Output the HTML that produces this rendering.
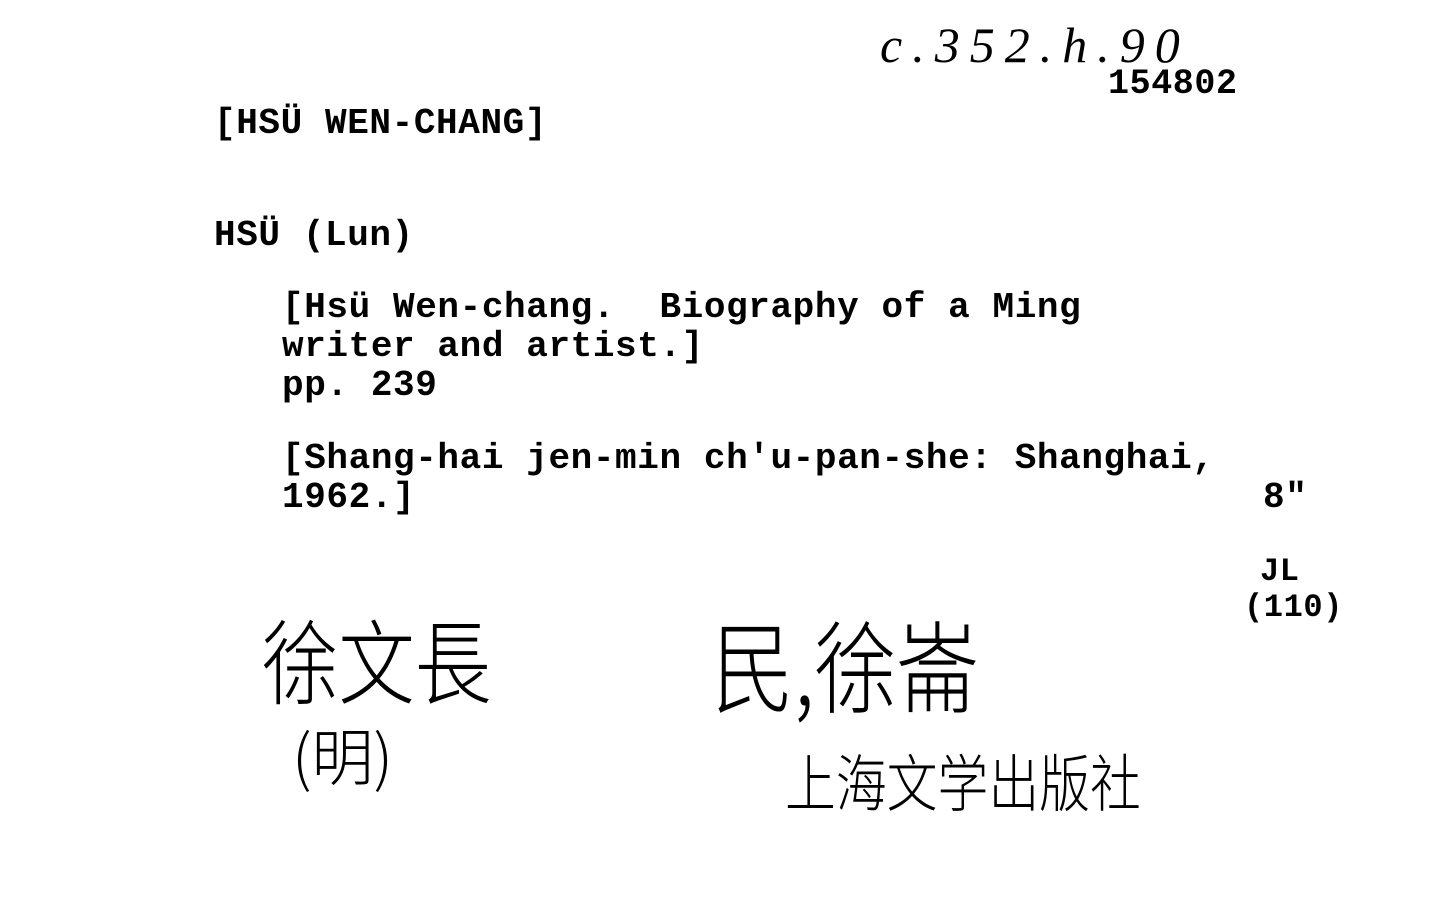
<!DOCTYPE html>
<html><head><meta charset="utf-8"><style>
html,body{margin:0;padding:0;background:#fff;}
body{width:1452px;height:900px;position:relative;overflow:hidden;color:#000;}
.t{position:absolute;font-family:"Liberation Mono",monospace;font-size:36px;line-height:40px;white-space:pre;font-weight:bold;letter-spacing:0.6px;}
.h{position:absolute;font-family:"Noto Sans CJK SC","WenQuanYi Zen Hei",sans-serif;font-weight:300;white-space:pre;line-height:1;transform-origin:0 0;}
.hw{position:absolute;font-family:"Liberation Serif",serif;font-style:italic;white-space:pre;line-height:1;}
</style></head><body>
<div class="hw" style="left:880px;top:20px;font-size:50px;letter-spacing:10px;">c.352.h.90</div>
<div class="t" style="left:1108px;top:64px;font-size:35px;">154802</div>
<div class="t" style="left:214px;top:104px;">[HSÜ WEN-CHANG]</div>
<div class="t" style="left:214px;top:216px;">HSÜ (Lun)</div>
<div class="t" style="left:282px;top:288px;">[Hsü Wen-chang.  Biography of a Ming</div>
<div class="t" style="left:282px;top:327px;">writer and artist.]</div>
<div class="t" style="left:282px;top:366px;">pp. 239</div>
<div class="t" style="left:282px;top:439px;">[Shang-hai jen-min ch'u-pan-she: Shanghai,</div>
<div class="t" style="left:282px;top:478px;">1962.]</div>
<div class="t" style="left:1263px;top:478px;">8"</div>
<div class="t" style="left:1260px;top:552px;font-size:32px;">JL</div>
<div class="t" style="left:1244px;top:588px;font-size:32px;">(110)</div>
<div class="h" style="left:262px;top:612px;font-size:92px;transform:scaleX(0.83);">徐文長</div>
<div class="h" style="left:292px;top:722px;font-size:62px;">(明)</div>
<div class="h" style="left:712px;top:612px;font-size:100px;transform:scaleX(0.82);">民,徐崙</div>
<div class="h" style="left:785px;top:748px;font-size:62px;transform:scaleX(0.82);">上海文学出版社</div>
</body></html>
